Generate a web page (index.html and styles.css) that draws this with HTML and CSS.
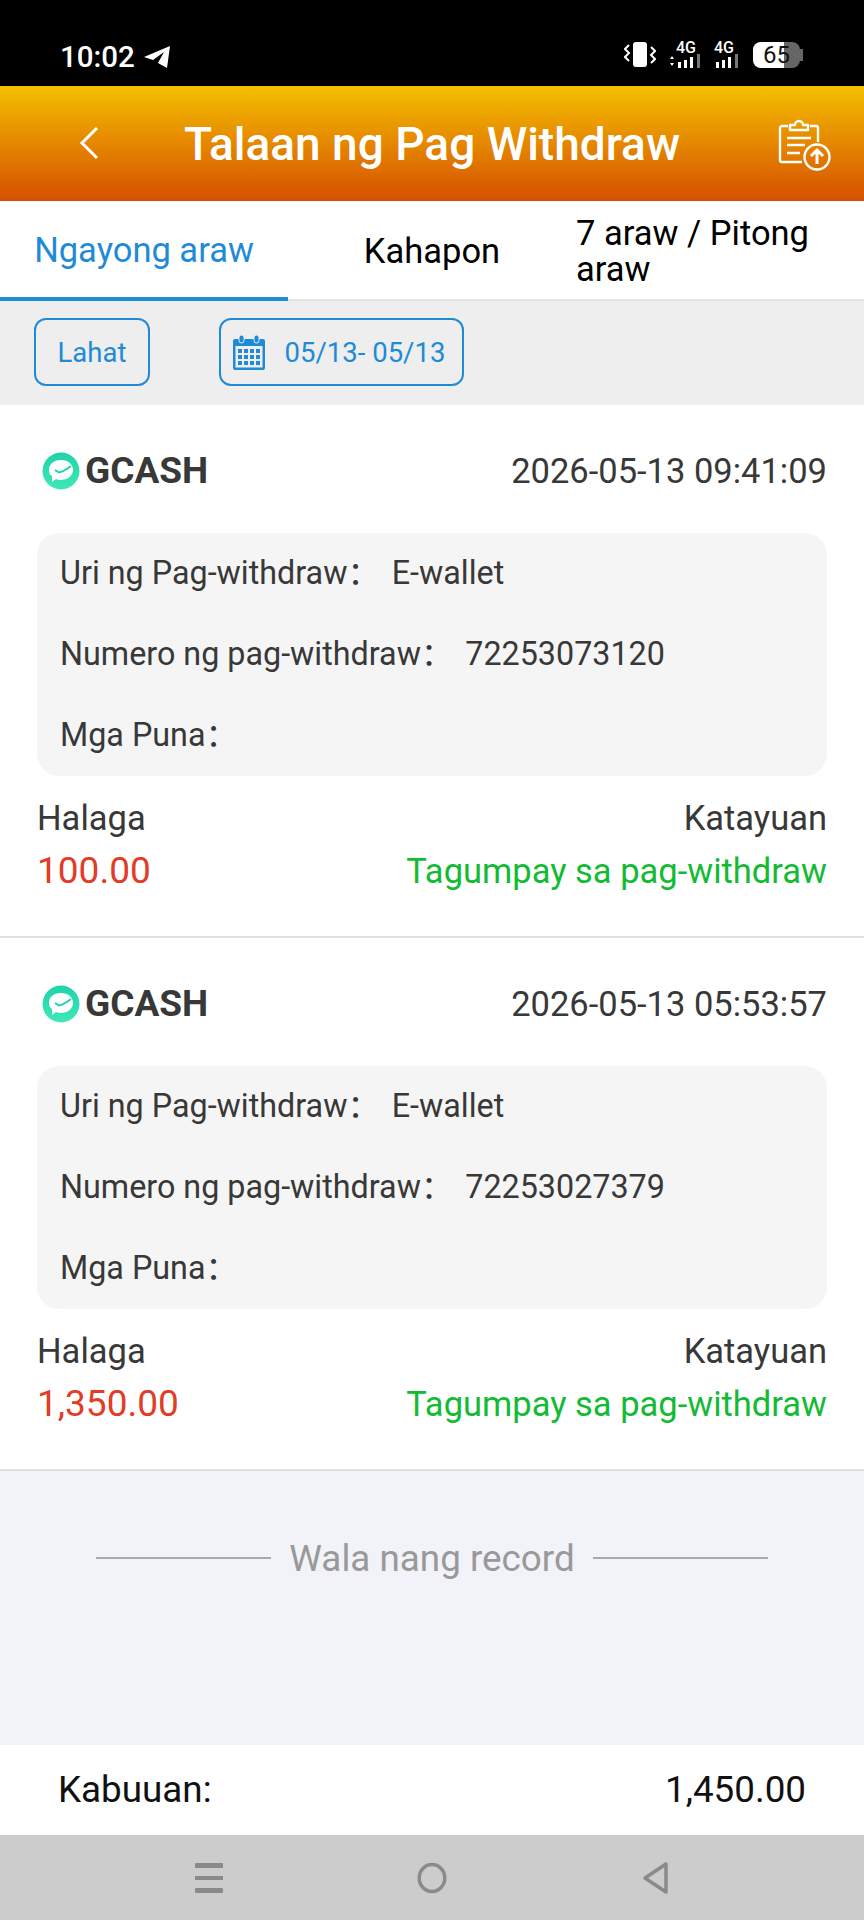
FILE: index.html
```html
<!DOCTYPE html>
<html>
<head>
	<meta charset="utf-8" />
	<title>Talaan ng Pag Withdraw</title>
	<link rel="stylesheet" href="styles.css">
</head>
<body>
<div class="status">
	<div class="statusLeft">
		<span class="clock">10:02</span>
		<svg class="plane" width="28" height="24" viewBox="0 0 28 24"><path d="M1 12 L27 1 L24 23 L15 18 L21 7 L10 15 Z" fill="#fff"/></svg>
	</div>
	<div class="statusRight">
		<svg width="32" height="26" viewBox="0 0 32 26"><rect x="9" y="0" width="14" height="25" rx="3" fill="#fff"/><path d="M5 3 L1 7 L5 11 L1 15 L5 19 M27 5 L31 9 L27 13 L31 17 L27 21" fill="none" stroke="#fff" stroke-width="2"/></svg>
		<div class="net">
			<span class="netLabel">4G</span>
			<svg width="34" height="14" viewBox="0 0 34 14"><path d="M3 2 L5 5 L1 5 Z M3 12 L5 9 L1 9 Z" fill="#fff"/><rect x="9" y="8" width="3" height="6" fill="#fff"/><rect x="15" y="6" width="3" height="8" fill="#fff"/><rect x="21" y="3" width="3" height="11" fill="#fff"/><rect x="28" y="0" width="3" height="14" fill="#777"/></svg>
		</div>
		<div class="net net2">
			<span class="netLabel">4G</span>
			<svg width="27" height="14" viewBox="0 0 27 14"><rect x="2" y="8" width="3" height="6" fill="#fff"/><rect x="8" y="6" width="3" height="8" fill="#fff"/><rect x="14" y="3" width="3" height="11" fill="#fff"/><rect x="21" y="0" width="3" height="14" fill="#777"/></svg>
		</div>
		<div class="battery"><div class="batteryFill"></div><span class="batteryNum">65</span></div>
		<div class="batteryTip"></div>
	</div>
</div>

<div class="header">
	<svg class="back" width="22" height="34" viewBox="0 0 22 34"><path d="M19 2 L4 17 L19 32" fill="none" stroke="#fff" stroke-width="3"/></svg>
	<div class="title">Talaan ng Pag Withdraw</div>
	<svg class="upload" width="54" height="54" viewBox="0 0 54 54">
		<path d="M10 8 H4 a2 2 0 0 0 -2 2 V42 a2 2 0 0 0 2 2 H24 M32 8 H38 a2 2 0 0 1 2 2 V24 M12 12 V7 H17 a4 4 0 0 1 8 0 H30 V12 Z" fill="none" stroke="#fff" stroke-width="2.4" stroke-linejoin="round"/>
		<path d="M9 20 H33 M9 27 H27 M9 35 H22" fill="none" stroke="#fff" stroke-width="2.4"/>
		<circle cx="39" cy="39" r="12.5" fill="none" stroke="#fff" stroke-width="2.4"/>
		<path d="M39 46 V33 M33 38 L39 32 L45 38" fill="none" stroke="#fff" stroke-width="3"/>
	</svg>
</div>

<div class="tabs">
	<div class="tab tabActive">Ngayong araw</div>
	<div class="tab">Kahapon</div>
	<div class="tab tabLong">7 araw / Pitong araw</div>
</div>

<div class="filters">
	<div class="filterBtn btnAll">Lahat</div>
	<div class="filterBtn btnDate">
		<svg width="32" height="35" viewBox="0 0 32 35">
			<path d="M0 6 a2 2 0 0 1 2 -2 H30 a2 2 0 0 1 2 2 V33 a2 2 0 0 1 -2 2 H2 a2 2 0 0 1 -2 -2 Z" fill="#1f8ad6"/>
			<rect x="2.500" y="11" width="27" height="21.500" fill="#eee"/>
			<rect x="6" y="0" width="5" height="8" rx="2.500" fill="#1f8ad6" stroke="#eee"/>
			<rect x="21" y="0" width="5" height="8" rx="2.500" fill="#1f8ad6" stroke="#eee"/>
			<g fill="#1f8ad6">
				<rect x="5" y="14" width="4" height="4"/><rect x="11" y="14" width="4" height="4"/><rect x="17" y="14" width="4" height="4"/><rect x="23" y="14" width="4" height="4"/>
				<rect x="5" y="20" width="4" height="4"/><rect x="11" y="20" width="4" height="4"/><rect x="17" y="20" width="4" height="4"/><rect x="23" y="20" width="4" height="4"/>
				<rect x="5" y="26" width="4" height="4"/><rect x="11" y="26" width="4" height="4"/><rect x="17" y="26" width="4" height="4"/><rect x="23" y="26" width="4" height="4"/>
			</g>
		</svg>
		<span>05/13- 05/13</span>
	</div>
</div>

<div class="list">
	<div class="card">
		<div class="cardTop">
			<div class="brand">
				<svg class="gcash" width="38" height="38" viewBox="0 0 38 38"><defs><linearGradient id="gcashFill" x1="0" y1="0" x2="0" y2="1"><stop offset="0" stop-color="#1fd3a8"/><stop offset="1" stop-color="#3fe8b8"/></linearGradient></defs><circle cx="19" cy="19" r="18.500" fill="url(#gcashFill)"/><path d="M7 18 C7 11 13 8 19 8 C26 8 31 12 31 18 C31 24 25 28 19 28 C17 28 16 28 14 27 L10 30 L10 24 C8 23 7 21 7 18 Z" fill="#fff"/><path d="M13 18 L17 20.500 C21 20 25 17 29 14" fill="none" stroke="#1fd3a8" stroke-width="2"/></svg>
				<span class="brandName">GCASH</span>
			</div>
			<div class="time">2026-05-13 09:41:09</div>
		</div>
		<div class="info">
			<div class="infoRow"><span class="infoKey">Uri ng Pag-withdraw：</span><span>E-wallet</span></div>
			<div class="infoRow"><span class="infoKey">Numero ng pag-withdraw：</span><span>72253073120</span></div>
			<div class="infoRow"><span class="infoKey">Mga Puna：</span></div>
		</div>
		<div class="cardRow"><span>Halaga</span><span>Katayuan</span></div>
		<div class="cardRow cardValues"><span class="amount">100.00</span><span class="state">Tagumpay sa pag-withdraw</span></div>
	</div>
	<div class="card">
		<div class="cardTop">
			<div class="brand">
				<svg class="gcash" width="38" height="38" viewBox="0 0 38 38"><circle cx="19" cy="19" r="18.500" fill="url(#gcashFill)"/><path d="M7 18 C7 11 13 8 19 8 C26 8 31 12 31 18 C31 24 25 28 19 28 C17 28 16 28 14 27 L10 30 L10 24 C8 23 7 21 7 18 Z" fill="#fff"/><path d="M13 18 L17 20.500 C21 20 25 17 29 14" fill="none" stroke="#1fd3a8" stroke-width="2"/></svg>
				<span class="brandName">GCASH</span>
			</div>
			<div class="time">2026-05-13 05:53:57</div>
		</div>
		<div class="info">
			<div class="infoRow"><span class="infoKey">Uri ng Pag-withdraw：</span><span>E-wallet</span></div>
			<div class="infoRow"><span class="infoKey">Numero ng pag-withdraw：</span><span>72253027379</span></div>
			<div class="infoRow"><span class="infoKey">Mga Puna：</span></div>
		</div>
		<div class="cardRow"><span>Halaga</span><span>Katayuan</span></div>
		<div class="cardRow cardValues"><span class="amount">1,350.00</span><span class="state">Tagumpay sa pag-withdraw</span></div>
	</div>
	<div class="noMore">
		<div class="noMoreLine"></div>
		<span>Wala nang record</span>
		<div class="noMoreLine"></div>
	</div>
</div>

<div class="total"><span>Kabuuan:</span><span>1,450.00</span></div>

<div class="navbar">
	<svg width="30" height="32" viewBox="0 0 30 32"><rect x="1" y="1" width="28" height="5" rx="1" fill="#8a8a8a"/><rect x="1" y="14" width="28" height="4" fill="#8a8a8a"/><rect x="1" y="26" width="28" height="5" rx="1" fill="#8a8a8a"/></svg>
	<svg width="30" height="32" viewBox="0 0 30 32"><ellipse cx="15" cy="16" rx="12.800" ry="13.500" fill="none" stroke="#8a8a8a" stroke-width="3.500"/></svg>
	<svg width="30" height="34" viewBox="0 0 30 34"><path d="M26 3 L5 17 L26 31 Z" fill="none" stroke="#8a8a8a" stroke-width="3.500" stroke-linejoin="round"/></svg>
</div>
</body>
</html>
```

FILE: styles.css
```css
*{
	box-sizing: border-box;
}
body{
	margin: 0;
	padding: 0;
	width: 864px;
	height: 1920px;
	display: flex;
	flex-direction: column;
	background-color: #f2f3f8;
	font-family: Roboto, "Noto Sans CJK SC", sans-serif;
	color: #383838;
	overflow: hidden;
}
/* status bar */
.status{
	height: 86px;
	flex: none;
	padding: 0 61px 0 60px;
	background-color: #000;
	color: #fff;
	display: flex;
	justify-content: space-between;
	align-items: flex-start;
}
.statusLeft{
	display: flex;
	align-items: center;
	gap: 8px;
	margin-top: 42px;
}
.clock{
	font-size: 29.500px;
	font-weight: 500;
	line-height: 30px;
}
.statusRight{
	display: flex;
	align-items: flex-end;
	margin-top: 42px;
}
.net{
	display: flex;
	flex-direction: column;
	align-items: flex-end;
	margin-left: 13px;
}
.net2{
	margin-left: 11px;
}
.netLabel{
	font-size: 16px;
	line-height: 12px;
	font-weight: 500;
	margin-right: 7px;
}
.battery{
	width: 47px;
	height: 26px;
	margin-left: 12px;
	border-radius: 8px;
	background-color: #666;
	overflow: hidden;
	display: flex;
	align-items: center;
	justify-content: center;
	position: relative;
}
.batteryFill{
	position: absolute;
	left: 0;
	top: 0;
	bottom: 0;
	width: 31px;
	background-color: #fff;
}
.batteryNum{
	position: relative;
	color: #111;
	font-size: 24px;
	font-weight: 400;
}
.batteryTip{
	width: 3px;
	height: 12px;
	margin-bottom: 7px;
	background-color: #666;
}
/* header */
.header{
	height: 115px;
	flex: none;
	display: flex;
	align-items: center;
	justify-content: center;
	position: relative;
	background: linear-gradient(#f4bf00, #d64f00);
}
.title{
	font-size: 46px;
	font-weight: 500;
	color: #fff;
}
.back{
	position: absolute;
	left: 78px;
	top: 40px;
}
.upload{
	position: absolute;
	left: 778px;
	top: 32px;
}
/* tabs */
.tabs{
	height: 100px;
	flex: none;
	display: flex;
	background-color: #fff;
	border-bottom: 2px solid #e2e2e2;
}
.tab{
	flex: 1;
	height: 100px;
	display: flex;
	align-items: center;
	justify-content: center;
	font-size: 34.500px;
	line-height: 36px;
	color: #000;
}
.tabActive{
	padding-top: 2px;
	color: #1f8ad6;
	border-bottom: 4px solid #1f8ad6;
}
.tabLong{
	justify-content: flex-start;
}
/* filters */
.filters{
	height: 104px;
	flex: none;
	display: flex;
	align-items: center;
	padding: 0 34px 2px 34px;
	background-color: #eee;
	gap: 69px;
}
.filterBtn{
	height: 68px;
	border: 2px solid #1f8ad6;
	border-radius: 12px;
	color: #1f8ad6;
	font-size: 27.500px;
	display: flex;
	align-items: center;
	justify-content: center;
}
.btnAll{
	width: 116px;
}
.btnDate{
	width: 245px;
	padding-right: 5px;
	gap: 20px;
}
/* list */
.list{
	flex: 1;
}
.card{
	height: 533px;
	padding: 0 37px;
	background-color: #fff;
	border-bottom: 2px solid #e0e0e0;
}
.cardTop{
	height: 128px;
	padding-top: 3px;
	display: flex;
	align-items: center;
	justify-content: space-between;
}
.brand{
	display: flex;
	align-items: center;
	gap: 5px;
	padding-left: 5px;
}
.brandName{
	font-size: 37px;
	font-weight: 700;
}
.time{
	font-size: 34.500px;
}
.info{
	height: 243px;
	padding: 0 23px;
	border-radius: 22px;
	background-color: #f5f5f5;
}
.infoRow{
	height: 81px;
	line-height: 80px;
	display: flex;
	align-items: baseline;
	font-size: 32.300px;
}
.infoKey{
	margin-right: 12px;
}
.cardRow{
	display: flex;
	justify-content: space-between;
	font-size: 34.500px;
	line-height: 40px;
	margin-top: 22px;
}
.cardValues{
	margin-top: 13px;
}
.amount{
	font-size: 37px;
	color: #e33c26;
}
.state{
	color: #12bb33;
}
.noMore{
	height: 144px;
	padding-top: 30px;
	display: flex;
	align-items: center;
	justify-content: center;
	gap: 18px;
	color: #999;
	font-size: 36.800px;
}
.noMoreLine{
	width: 175px;
	height: 2px;
	background-color: #aaa;
}
/* footer */
.total{
	height: 90px;
	flex: none;
	display: flex;
	align-items: center;
	justify-content: space-between;
	padding: 0 58px 2px 58px;
	background-color: #fff;
	color: #111;
	font-size: 36.800px;
}
.navbar{
	height: 85px;
	flex: none;
	display: flex;
	align-items: center;
	justify-content: center;
	gap: 193px;
	background-color: #ccc;
}
```
